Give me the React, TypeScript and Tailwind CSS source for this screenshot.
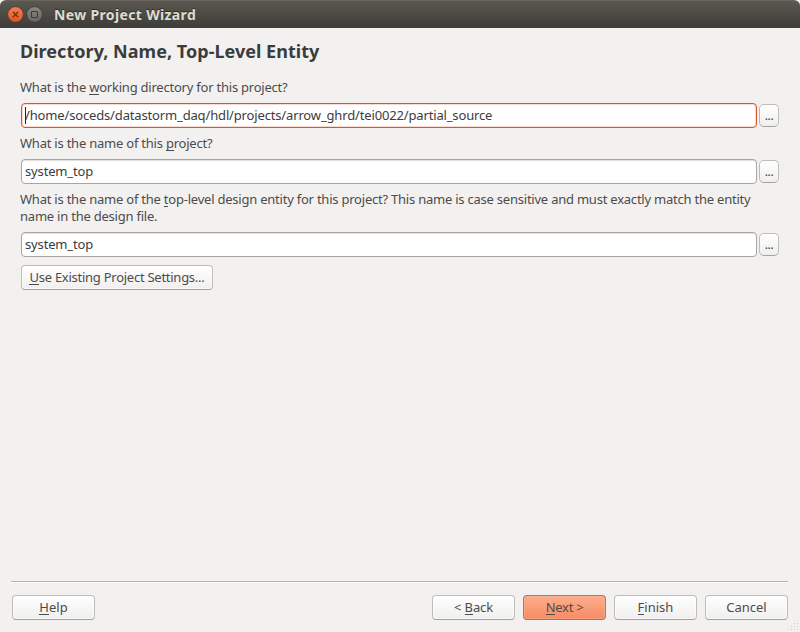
import type { ReactNode } from "react";

function Mnemonic({ children }: { children: ReactNode }) {
  return (
    <span className="bg-[linear-gradient(#4c4c4c,#4c4c4c)] bg-[length:100%_1px] bg-[position:0_16px] bg-no-repeat">
      {children}
    </span>
  );
}

function Label({ className = "", children }: { className?: string; children: ReactNode }) {
  return <p className={`pl-5 leading-[17px] tracking-[-0.225px] ${className}`}>{children}</p>;
}

function PathRow({ className = "", focused = false, value }: { className?: string; focused?: boolean; value: string }) {
  return (
    <div className={`flex items-center gap-[2px] pl-[21px] ${className}`}>
      <div
        className={`flex h-[25px] w-[736px] items-center rounded-[4px] border bg-white pl-[3px] tracking-[-0.152px] text-[#3c3c3c] ${
          focused
            ? "border-[#d8572c] shadow-[inset_0_0_0_1px_#fbd9cc]"
            : "border-[#a9a6a2] shadow-[inset_0_1px_0_#e3e1df]"
        }`}
      >
        {focused && <span className="-mr-px h-[17px] w-px bg-[#222222]" />}
        <span className="leading-[17px]">{value}</span>
      </div>
      <button className="flex h-[23px] w-5 justify-center rounded-[5px] border border-[#c0bdb9] border-b-[#a5a29e] bg-linear-to-b from-white to-[#f0efee] text-[12px] leading-[21px] tracking-[-0.4px] text-[#3c3c3c]">
        ...
      </button>
    </div>
  );
}

function Button({ primary = false, className = "w-[83px]", children }: { primary?: boolean; className?: string; children: ReactNode }) {
  return (
    <button
      className={`flex h-[25px] items-center justify-center rounded-[4px] border leading-[17px] whitespace-pre ${
        primary
          ? "border-[#b9765c] border-b-[#a0705f] bg-linear-to-b from-[#fdae8e] to-[#f68b62] shadow-[inset_0_0_0_1px_#fbb49980]"
          : "border-[#c0bdb9] border-b-[#a5a29e] bg-linear-to-b from-white to-[#f0efee] shadow-[inset_0_0_0_1px_#ffffff99]"
      } ${className}`}
    >
      <span>{children}</span>
    </button>
  );
}

export default function App() {
  return (
    <div className="relative flex h-[632px] w-[800px] flex-col overflow-hidden bg-[#f2f1f0] font-['Noto_Sans',sans-serif] text-[13px] text-[#4c4c4c]">
      <header className="flex h-7 items-center rounded-t-[6px] border-t border-[#66645c] bg-linear-to-b from-[#5a5850] to-[#3d3c38] pl-[7px]">
        <svg className="h-[17px] w-9" viewBox="0 0 36 17">
          <defs>
            <linearGradient id="close" x2="0" y2="1">
              <stop stopColor="#f58055" />
              <stop offset="1" stopColor="#e5501f" />
            </linearGradient>
            <linearGradient id="max" x2="0" y2="1">
              <stop stopColor="#8c8a83" />
              <stop offset="1" stopColor="#65635d" />
            </linearGradient>
          </defs>
          <circle cx="8.5" cy="8.5" r="7.8" fill="url(#close)" stroke="#3b3530" strokeWidth=".6" />
          <path d="M5.9 5.9l5.2 5.2M11.1 5.9l-5.2 5.2" stroke="#5a2a1a" strokeWidth="1.3" />
          <circle cx="27.5" cy="8.5" r="7.8" fill="url(#max)" stroke="#35342f" strokeWidth=".6" />
          <path d="M24.5 5.5h6v6h-6z" fill="none" stroke="#3d3c37" />
        </svg>
        <h1 className="ml-[11px] text-[14px] font-bold leading-5 tracking-[0.35px] text-[#dfdbd2] [text-shadow:0_-1px_0_#2c2b28]">New Project Wizard</h1>
      </header>

      <main className="flex-1">
        <h2 className="pt-[11px] pl-5 text-[18px] font-bold leading-6 tracking-[0.03px] text-[#3c3c3c]">Directory, Name, Top-Level Entity</h2>
        <Label className="mt-4">
          What is the <Mnemonic>w</Mnemonic>orking directory for this project?
        </Label>
        <PathRow className="mt-[7px]" focused value="/home/soceds/datastorm_daq/hdl/projects/arrow_ghrd/tei0022/partial_source" />
        <Label className="mt-[7px]">
          What is the name of this <Mnemonic>p</Mnemonic>roject?
        </Label>
        <PathRow className="mt-[7px]" value="system_top" />
        <Label className="mt-[7px]">
          What is the name of the <Mnemonic>t</Mnemonic>op-level design entity for this project? This name is case sensitive and must exactly match the entity
          <br />
          name in the design file.
        </Label>
        <PathRow className="mt-[7px]" value="system_top" />
        <div className="mt-2 pl-[21px]">
          <Button className="w-48 tracking-[-0.26px]">
            <Mnemonic>U</Mnemonic>se Existing Project Settings...
          </Button>
        </div>
      </main>

      <footer className="h-[51px] px-3">
        <div className="-ml-px h-[2px] w-[777px] border-b border-white bg-[#b5b2ae]" />
        <div className="mt-3 flex gap-2">
          <Button>
            <Mnemonic>H</Mnemonic>elp
          </Button>
          <div className="flex-1" />
          <Button className="w-[83px] tracking-[-0.1px]">
            {"< "}
            <Mnemonic>B</Mnemonic>ack
          </Button>
          <Button primary className="w-[83px] tracking-[-0.3px]">
            <Mnemonic>N</Mnemonic>ext &gt;
          </Button>
          <Button>
            <Mnemonic>F</Mnemonic>inish
          </Button>
          <Button>Cancel</Button>
        </div>
      </footer>

      <svg className="absolute right-0 bottom-0 h-3 w-3" viewBox="0 0 12 12" fill="#d3d1ce">
        <path d="M9 0h1v1h-1zM6 3h1v1h-1zM9 3h1v1h-1zM3 6h1v1h-1zM6 6h1v1h-1zM9 6h1v1h-1zM0 9h1v1h-1zM3 9h1v1h-1zM6 9h1v1h-1zM9 9h1v1h-1z" />
      </svg>
    </div>
  );
}
